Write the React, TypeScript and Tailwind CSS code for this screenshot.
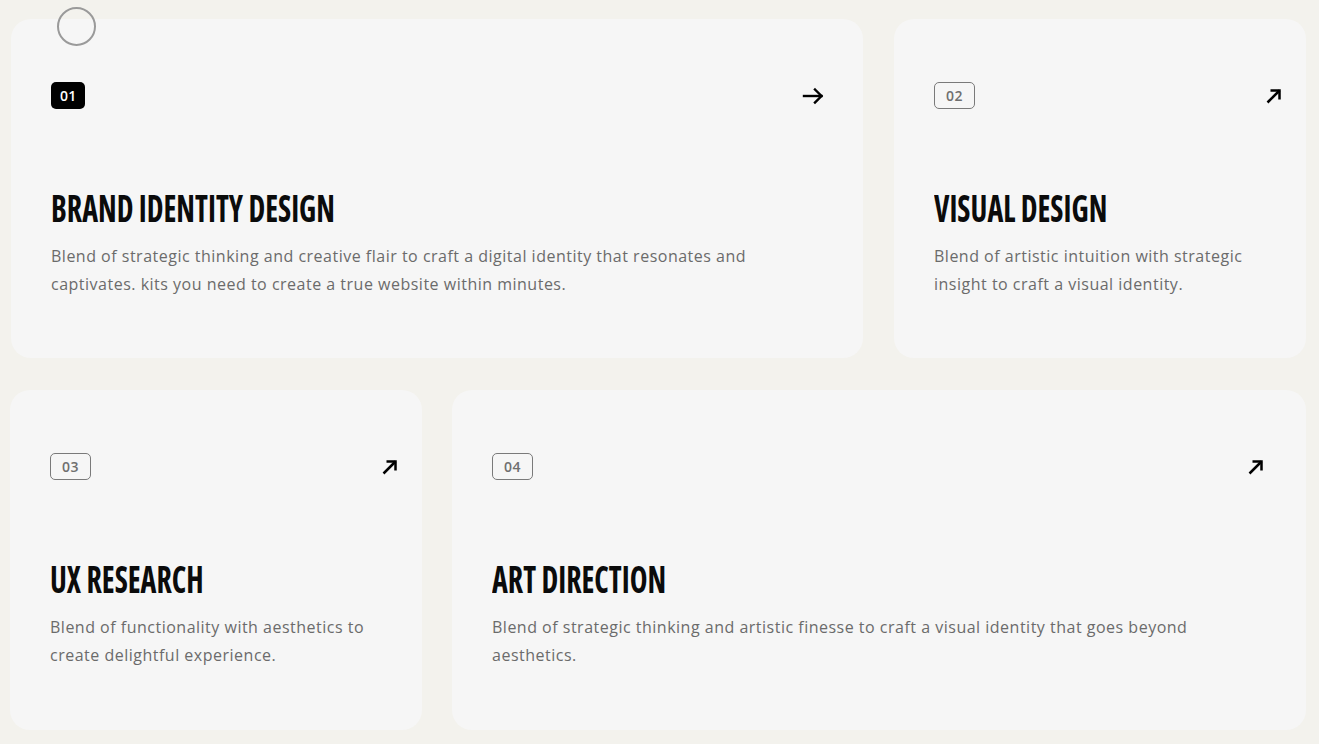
import React from "react";

type CardProps = {
  num: string;
  active?: boolean;
  title: string;
  desc: string;
  className: string;
  arrowPad: string;
};

function ArrowR() {
  return (
    <svg width="22" height="18" viewBox="0 0 22 18" fill="none" stroke="#000" strokeWidth="2.4" strokeLinecap="square">
      <path d="M2 9H19.5" />
      <path d="M13 2.5L19.5 9L13 15.5" strokeLinejoin="miter" />
    </svg>
  );
}

function ArrowUR() {
  return (
    <svg width="16" height="16" viewBox="0 0 16 16" fill="none" stroke="#000" strokeWidth="2.5" strokeLinecap="butt">
      <path d="M1.5 14.5L13.5 2.5" />
      <path d="M4.5 2.5H13.5V11.5" strokeLinejoin="miter" />
    </svg>
  );
}

function Card({ num, active, title, desc, className, arrowPad }: CardProps) {
  return (
    <div className={`rounded-[20px] bg-[#f6f6f6] pl-10 pt-[63px] ${arrowPad} ${className}`}>
      <div className="flex h-[27px] items-center justify-between">
        {active ? (
          <span className="flex h-[27px] items-center rounded-[5px] bg-black px-[9px] text-[14px] font-semibold tracking-[0.2px] text-white">
            {num}
          </span>
        ) : (
          <span className="flex h-[27px] items-center rounded-[5px] border border-[#7a7a7a] px-[11px] text-[14px] font-semibold tracking-[0.4px] text-[#6f6f6f]">
            {num}
          </span>
        )}
        {active ? <ArrowR /> : <ArrowUR />}
      </div>
      <h2
        className="mt-[76px] whitespace-nowrap text-[38px] font-bold uppercase leading-[44px] text-[#0b0b0b]"
        style={{ fontStretch: "condensed" }}
      >
        <span className="inline-block origin-left scale-x-[0.79]">{title}</span>
      </h2>
      <p className="mt-[13px] max-w-[730px] pr-6 text-[16px] leading-[28px] tracking-[0.5px] text-[#6b6b6b]">
        {desc}
      </p>
    </div>
  );
}

export default function App() {
  return (
    <div
      className="relative min-h-[744px] w-[1319px] overflow-hidden bg-[#f3f2ed] pt-[19px]"
      style={{ fontFamily: '"Open Sans", "Noto Sans", sans-serif' }}
    >
      <div className="flex gap-[31px] pl-[11px]">
        <Card
          num="01"
          active
          title="Brand Identity Design"
          desc="Blend of strategic thinking and creative flair to craft a digital identity that resonates and captivates. kits you need to create a true website within minutes."
          className="h-[339px] w-[852px]"
          arrowPad="pr-[39px]"
        />
        <Card
          num="02"
          title="Visual Design"
          desc="Blend of artistic intuition with strategic insight to craft a visual identity."
          className="h-[339px] w-[412px]"
          arrowPad="pr-[24px]"
        />
      </div>
      <div className="mt-[32px] flex gap-[30px] pl-[10px]">
        <Card
          num="03"
          title="UX Research"
          desc="Blend of functionality with aesthetics to create delightful experience."
          className="h-[340px] w-[412px]"
          arrowPad="pr-[24px]"
        />
        <Card
          num="04"
          title="Art Direction"
          desc="Blend of strategic thinking and artistic finesse to craft a visual identity that goes beyond aesthetics."
          className="h-[340px] w-[854px]"
          arrowPad="pr-[42px]"
        />
      </div>
      <div className="pointer-events-none absolute left-[57px] top-[7px] h-[39px] w-[39px] rounded-full border-2 border-[#9a9a9a]" />
    </div>
  );
}
